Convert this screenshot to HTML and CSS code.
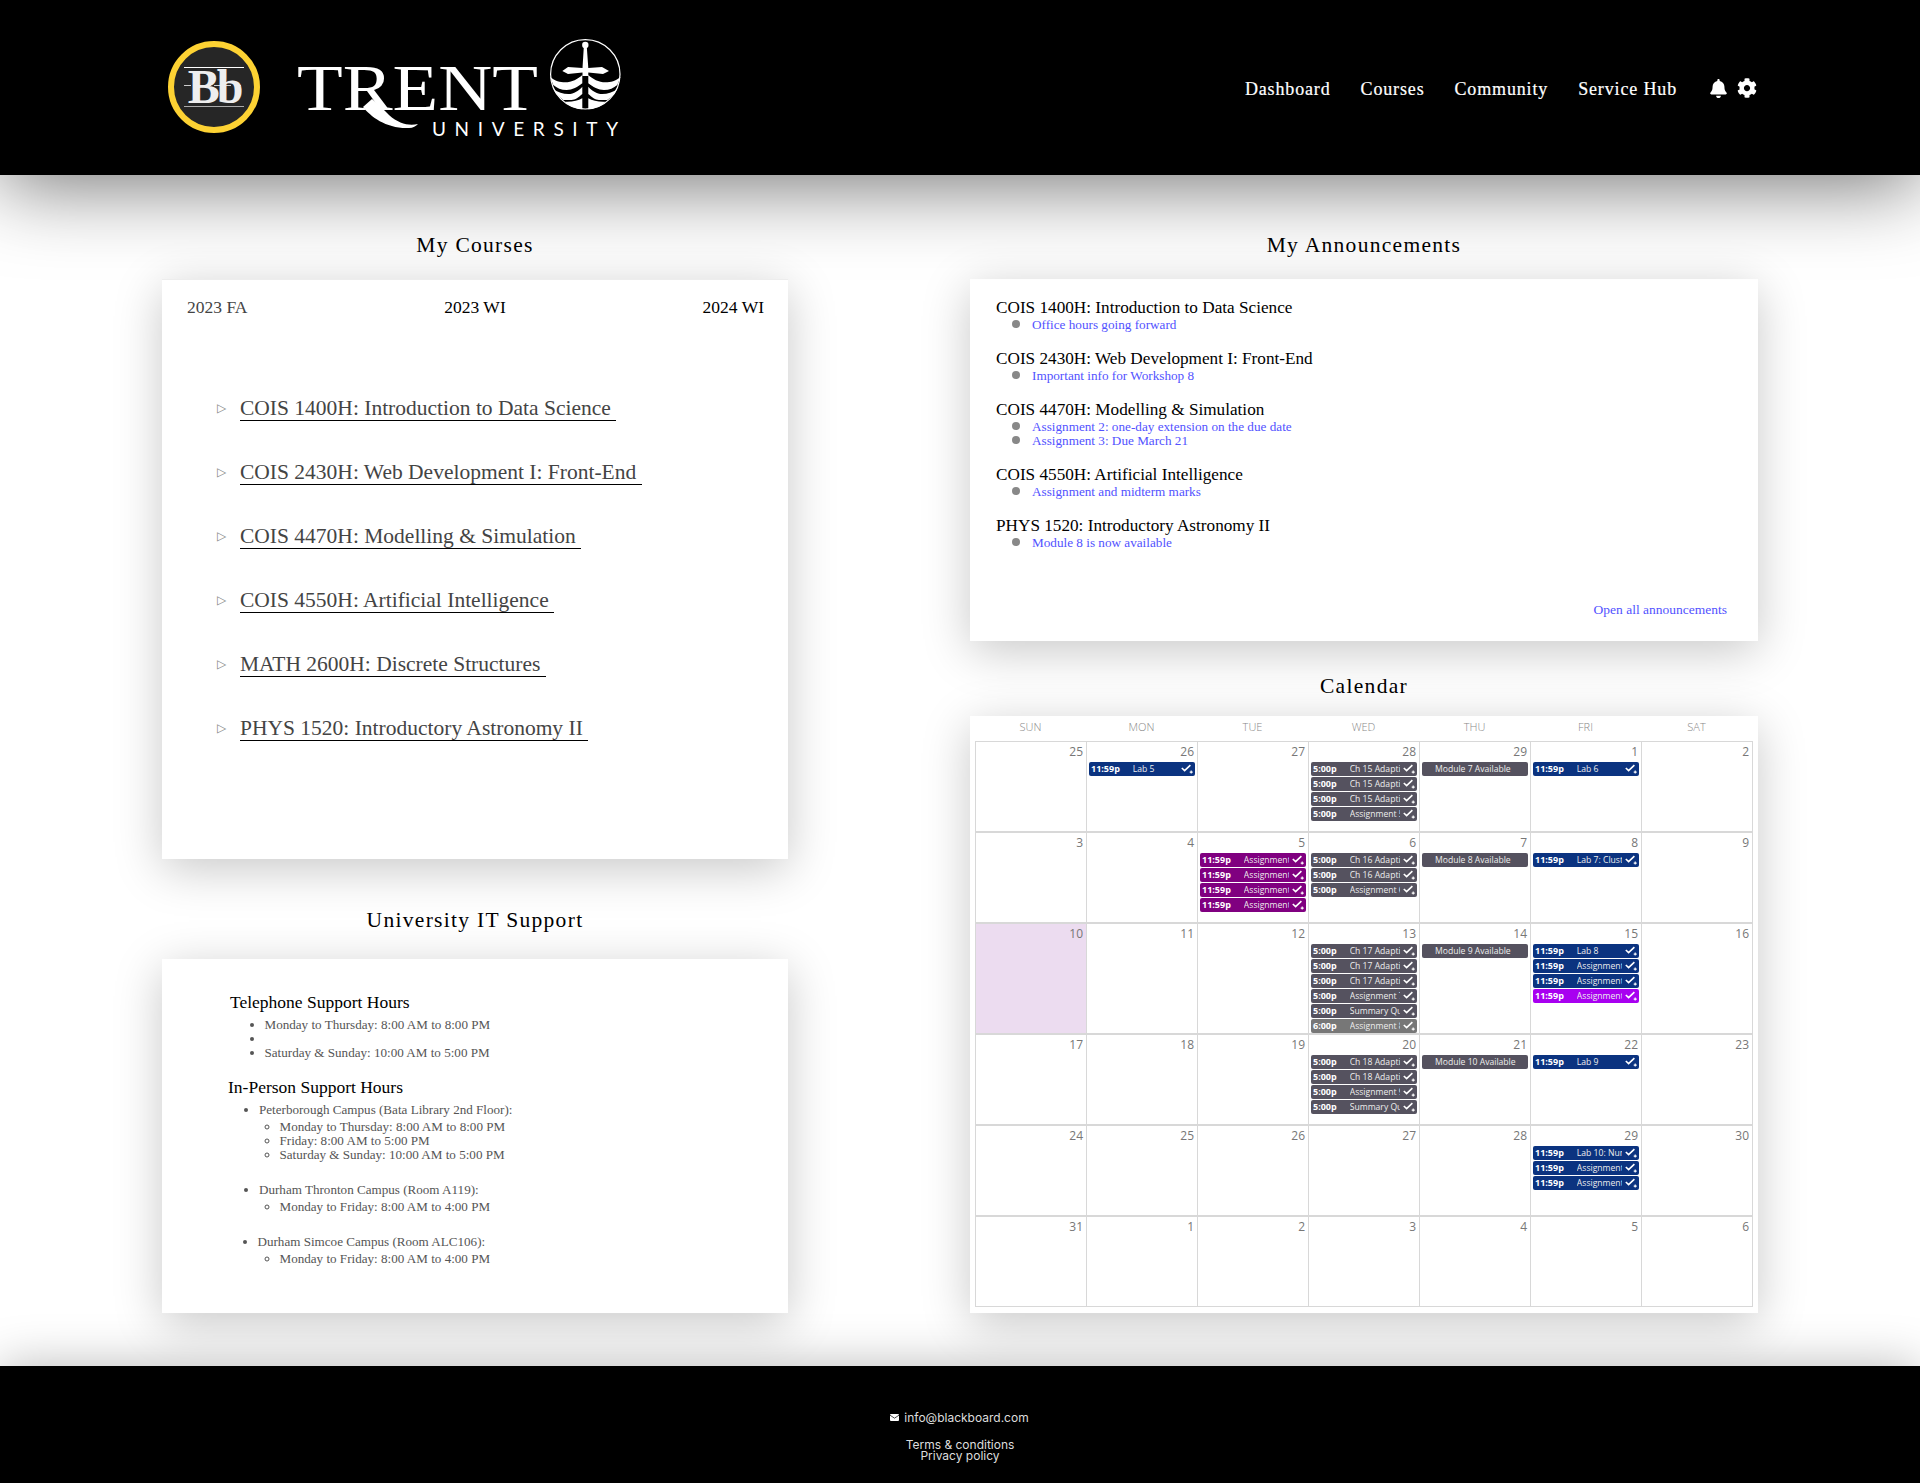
FILE: index.html
```html
<!DOCTYPE html>
<html lang="en">
<head>
    <meta charset="UTF-8">
    <title>Dashboard</title>
    <link rel="stylesheet" href="styles.css">
</head>
<body>

<svg class="defs" width="0" height="0">
    <symbol id="chk" viewBox="0 0 12 10">
        <path d="M0.8 4 L3.6 6.600 L9.400 1.200" fill="none" stroke="#fff" stroke-width="1.600"/>
        <path d="M10.200 6.600 V9.600 M8.700 8.100 H11.700" fill="none" stroke="#fff" stroke-width="1.100"/>
    </symbol>
</svg>

<header class="top">
    <svg class="bb" viewBox="0 0 92 92">
        <circle cx="46" cy="46" r="43" fill="#262626" stroke="#fdd233" stroke-width="6"/>
        <path d="M16 26.500 H76" stroke="#fff" stroke-width="1"/>
        <path d="M16 44.500 H76" stroke="#ccc" stroke-width="1" stroke-dasharray="7 3"/>
        <path d="M16 65.500 H76" stroke="#aaa" stroke-width="1"/>
        <text x="46" y="62" class="bb-text" text-anchor="middle">Bb</text>
    </svg>
    <svg class="trent" viewBox="0 0 326 100">
        <text x="0" y="73" class="trent-text" textLength="241" lengthAdjust="spacingAndGlyphs">TRENT</text>
        <path d="M66 70 C74 80 90 92 112 91 C116 91 119 89 121 87 C112 89 102 87 92 78 C86 72 80 66 75 62 Z" fill="#fff"/>
        <text x="135" y="99" class="trent-sub" textLength="186">UNIVERSITY</text>
        <g transform="translate(253 1)">
            <circle cx="35.300" cy="36.300" r="34.700" fill="none" stroke="#fff" stroke-width="1.200"/>
            <circle cx="35.300" cy="7" r="3.200" fill="#fff"/>
            <path d="M33.800 9 H36.800 L38.300 30 L52 29 L59 33 L53 36 L38.300 34.500 L38.300 38 L32.500 38 L32.500 34.500 L18 36 L12.300 33 L18 29 L32.500 30 Z" fill="#fff"/>
            <path d="M0 38.700 C5 43 10 44.300 15 44.300 C22 44.300 28 41 32.300 37 V45.300 C28 49 22 52 16.700 52 C11 52 7 50 3.300 47 Z" fill="#fff"/>
            <path d="M3.300 51.300 C8 54.500 13 56 18.300 56 C24 56 29 52.500 32.300 48.700 V56 C29 59 25 62 21.700 62 H13.300 C10 60 6 56 3.300 51.300 Z" fill="#fff"/>
            <path d="M15 63.700 C22 64 28 63 32.300 60.300 V71.300 C28 71 26 70 23.300 69.300 C20 68 17 66 15 63.700 Z" fill="#fff"/>
            <path d="M70.600 38.700 C65.600 43 60.600 44.300 55.600 44.300 C48.600 44.300 42.600 41 38.300 37 V45.300 C42.600 49 48.600 52 53.900 52 C59.600 52 63.600 50 67.300 47 Z" fill="#fff"/>
            <path d="M67.300 51.300 C62.600 54.500 57.600 56 52.300 56 C46.600 56 41.600 52.500 38.300 48.700 V56 C41.600 59 45.600 62 48.900 62 H57.300 C60.600 60 64.600 56 67.300 51.300 Z" fill="#fff"/>
            <path d="M55.600 63.700 C48.600 64 42.600 63 38.300 60.300 V71.300 C42.600 71 44.600 70 47.300 69.300 C50.600 68 53.600 66 55.600 63.700 Z" fill="#fff"/>
        </g>
    </svg>
    <nav class="nav">
        <a href="#">Dashboard</a>
        <a href="#">Courses</a>
        <a href="#">Community</a>
        <a href="#">Service Hub</a>
        <span class="nav-icons">
            <svg class="ic-bell" viewBox="0 0 448 512"><path fill="#fff" d="M224 512c35.32 0 63.97-28.65 63.97-64H160.03c0 35.35 28.65 64 63.97 64zm215.39-149.71c-19.32-20.76-55.47-51.99-55.47-154.29 0-77.7-54.48-139.9-127.94-155.16V32c0-17.67-14.32-32-31.98-32s-31.98 14.33-31.98 32v20.84C118.56 68.1 64.08 130.3 64.08 208c0 102.3-36.15 133.53-55.47 154.29-6 6.45-8.66 14.16-8.61 21.71.11 16.4 12.98 32 32.1 32h383.8c19.12 0 32-15.6 32.1-32 .05-7.55-2.61-15.27-8.61-21.71z"/></svg>
            <svg class="ic-gear" viewBox="0 0 512 512"><path fill="#fff" d="M487.4 315.7l-42.6-24.6c4.3-23.2 4.3-47 0-70.2l42.6-24.6c4.9-2.8 7.1-8.6 5.5-14-11.1-35.6-30-67.8-54.7-94.6-3.8-4.1-10-5.1-14.8-2.3L380.8 110c-17.9-15.4-38.5-27.3-60.8-35.1V25.8c0-5.6-3.9-10.5-9.4-11.7-36.7-8.2-74.3-7.8-109.2 0-5.5 1.2-9.4 6.1-9.4 11.7V75c-22.2 7.9-42.8 19.8-60.8 35.1L88.7 85.5c-4.9-2.8-11-1.9-14.8 2.3-24.7 26.7-43.6 58.9-54.7 94.6-1.7 5.4.6 11.2 5.5 14L67.3 221c-4.3 23.2-4.3 47 0 70.2l-42.6 24.6c-4.9 2.8-7.1 8.6-5.5 14 11.1 35.6 30 67.8 54.7 94.6 3.8 4.1 10 5.1 14.8 2.3l42.6-24.6c17.9 15.4 38.5 27.3 60.8 35.1v49.2c0 5.6 3.9 10.5 9.4 11.7 36.7 8.2 74.3 7.8 109.2 0 5.5-1.2 9.4-6.1 9.4-11.7v-49.2c22.2-7.9 42.8-19.8 60.8-35.1l42.6 24.6c4.9 2.8 11 1.9 14.8-2.3 24.7-26.7 43.6-58.9 54.7-94.6 1.5-5.5-.7-11.3-5.6-14.1zM256 336c-44.1 0-80-35.9-80-80s35.9-80 80-80 80 35.9 80 80-35.9 80-80 80z"/></svg>
        </span>
    </nav>
</header>

<main class="content">
    <div class="col">
        <h2 class="title">My Courses</h2>
        <section class="card courses">
            <div class="terms">
                <span class="term-off">2023 FA</span>
                <span>2023 WI</span>
                <span>2024 WI</span>
            </div>
            <ul class="course-list">
                <li><a href="#">COIS 1400H: Introduction to Data Science&nbsp;</a></li>
                <li><a href="#">COIS 2430H: Web Development I: Front-End&nbsp;</a></li>
                <li><a href="#">COIS 4470H: Modelling &amp; Simulation&nbsp;</a></li>
                <li><a href="#">COIS 4550H: Artificial Intelligence&nbsp;</a></li>
                <li><a href="#">MATH 2600H: Discrete Structures&nbsp;</a></li>
                <li><a href="#">PHYS 1520: Introductory Astronomy II&nbsp;</a></li>
            </ul>
        </section>

        <h2 class="title title-it">University IT Support</h2>
        <section class="card support">
            <h3 class="sup-head">Telephone Support Hours</h3>
            <ul class="sup-phone">
                <li>Monday to Thursday: 8:00 AM to 8:00 PM</li>
                <li class="blank"></li>
                <li>Saturday &amp; Sunday: 10:00 AM to 5:00 PM</li>
            </ul>
            <h3 class="sup-head sup-person">In-Person Support Hours</h3>
            <ul class="sup-campus">
                <li>Peterborough Campus (Bata Library 2nd Floor):
                    <ul>
                        <li>Monday to Thursday: 8:00 AM to 8:00 PM</li>
                        <li>Friday: 8:00 AM to 5:00 PM</li>
                        <li>Saturday &amp; Sunday: 10:00 AM to 5:00 PM</li>
                    </ul>
                </li>
                <li>Durham Thronton Campus (Room A119):
                    <ul>
                        <li>Monday to Friday: 8:00 AM to 4:00 PM</li>
                    </ul>
                </li>
                <li class="simcoe">Durham Simcoe Campus (Room ALC106):
                    <ul>
                        <li>Monday to Friday: 8:00 AM to 4:00 PM</li>
                    </ul>
                </li>
            </ul>
        </section>
    </div>

    <div class="col">
        <h2 class="title">My Announcements</h2>
        <section class="card news">
            <div class="news-item">
                <h3>COIS 1400H: Introduction to Data Science</h3>
                <ul><li><a href="#">Office hours going forward</a></li></ul>
            </div>
            <div class="news-item">
                <h3>COIS 2430H: Web Development I: Front-End</h3>
                <ul><li><a href="#">Important info for Workshop 8</a></li></ul>
            </div>
            <div class="news-item">
                <h3>COIS 4470H: Modelling &amp; Simulation</h3>
                <ul>
                    <li><a href="#">Assignment 2: one-day extension on the due date</a></li>
                    <li><a href="#">Assignment 3: Due March 21</a></li>
                </ul>
            </div>
            <div class="news-item">
                <h3>COIS 4550H: Artificial Intelligence</h3>
                <ul><li><a href="#">Assignment and midterm marks</a></li></ul>
            </div>
            <div class="news-item">
                <h3>PHYS 1520: Introductory Astronomy II</h3>
                <ul><li><a href="#">Module 8 is now available</a></li></ul>
            </div>
            <a class="news-all" href="#">Open all announcements</a>
        </section>

        <h2 class="title title-cal">Calendar</h2>
        <section class="card cal">
            <div class="cal-days">
                <span>Sun</span><span>Mon</span><span>Tue</span><span>Wed</span><span>Thu</span><span>Fri</span><span>Sat</span>
            </div>
            <div class="cal-grid">
                <!-- week 1 -->
                <div class="day"><i>25</i></div>
                <div class="day"><i>26</i>
                    <div class="ev navy"><b>11:59p</b><span>Lab 5</span><svg><use href="#chk"/></svg></div>
                </div>
                <div class="day"><i>27</i></div>
                <div class="day"><i>28</i>
                    <div class="ev slate"><b>5:00p</b><span>Ch 15 Adaptive Quiz</span><svg><use href="#chk"/></svg></div>
                    <div class="ev slate"><b>5:00p</b><span>Ch 15 Adaptive Quiz</span><svg><use href="#chk"/></svg></div>
                    <div class="ev slate"><b>5:00p</b><span>Ch 15 Adaptive Quiz</span><svg><use href="#chk"/></svg></div>
                    <div class="ev slate"><b>5:00p</b><span>Assignment 5</span><svg><use href="#chk"/></svg></div>
                </div>
                <div class="day"><i>29</i>
                    <div class="ev slate plain"><span>Module 7 Available</span></div>
                </div>
                <div class="day"><i>1</i>
                    <div class="ev navy"><b>11:59p</b><span>Lab 6</span><svg><use href="#chk"/></svg></div>
                </div>
                <div class="day"><i>2</i></div>

                <!-- week 2 -->
                <div class="day"><i>3</i></div>
                <div class="day"><i>4</i></div>
                <div class="day"><i>5</i>
                    <div class="ev plum"><b>11:59p</b><span>Assignment 1</span><svg><use href="#chk"/></svg></div>
                    <div class="ev plum"><b>11:59p</b><span>Assignment 2</span><svg><use href="#chk"/></svg></div>
                    <div class="ev plum"><b>11:59p</b><span>Assignment 3</span><svg><use href="#chk"/></svg></div>
                    <div class="ev plum"><b>11:59p</b><span>Assignment 4</span><svg><use href="#chk"/></svg></div>
                </div>
                <div class="day"><i>6</i>
                    <div class="ev slate"><b>5:00p</b><span>Ch 16 Adaptive Quiz</span><svg><use href="#chk"/></svg></div>
                    <div class="ev slate"><b>5:00p</b><span>Ch 16 Adaptive Quiz</span><svg><use href="#chk"/></svg></div>
                    <div class="ev slate"><b>5:00p</b><span>Assignment 6</span><svg><use href="#chk"/></svg></div>
                </div>
                <div class="day"><i>7</i>
                    <div class="ev slate plain"><span>Module 8 Available</span></div>
                </div>
                <div class="day"><i>8</i>
                    <div class="ev navy"><b>11:59p</b><span>Lab 7: Clustering</span><svg><use href="#chk"/></svg></div>
                </div>
                <div class="day"><i>9</i></div>

                <!-- week 3 -->
                <div class="day today"><i>10</i></div>
                <div class="day"><i>11</i></div>
                <div class="day"><i>12</i></div>
                <div class="day"><i>13</i>
                    <div class="ev slate"><b>5:00p</b><span>Ch 17 Adaptive Quiz</span><svg><use href="#chk"/></svg></div>
                    <div class="ev slate"><b>5:00p</b><span>Ch 17 Adaptive Quiz</span><svg><use href="#chk"/></svg></div>
                    <div class="ev slate"><b>5:00p</b><span>Ch 17 Adaptive Quiz</span><svg><use href="#chk"/></svg></div>
                    <div class="ev slate"><b>5:00p</b><span>Assignment 7</span><svg><use href="#chk"/></svg></div>
                    <div class="ev slate"><b>5:00p</b><span>Summary Quiz</span><svg><use href="#chk"/></svg></div>
                    <div class="ev ash"><b>6:00p</b><span>Assignment 8</span><svg><use href="#chk"/></svg></div>
                </div>
                <div class="day"><i>14</i>
                    <div class="ev slate plain"><span>Module 9 Available</span></div>
                </div>
                <div class="day"><i>15</i>
                    <div class="ev navy"><b>11:59p</b><span>Lab 8</span><svg><use href="#chk"/></svg></div>
                    <div class="ev navy"><b>11:59p</b><span>Assignment 3</span><svg><use href="#chk"/></svg></div>
                    <div class="ev navy"><b>11:59p</b><span>Assignment 4</span><svg><use href="#chk"/></svg></div>
                    <div class="ev violet"><b>11:59p</b><span>Assignment 5</span><svg><use href="#chk"/></svg></div>
                </div>
                <div class="day"><i>16</i></div>

                <!-- week 4 -->
                <div class="day"><i>17</i></div>
                <div class="day"><i>18</i></div>
                <div class="day"><i>19</i></div>
                <div class="day"><i>20</i>
                    <div class="ev slate"><b>5:00p</b><span>Ch 18 Adaptive Quiz</span><svg><use href="#chk"/></svg></div>
                    <div class="ev slate"><b>5:00p</b><span>Ch 18 Adaptive Quiz</span><svg><use href="#chk"/></svg></div>
                    <div class="ev slate"><b>5:00p</b><span>Assignment 9</span><svg><use href="#chk"/></svg></div>
                    <div class="ev slate"><b>5:00p</b><span>Summary Quiz</span><svg><use href="#chk"/></svg></div>
                </div>
                <div class="day"><i>21</i>
                    <div class="ev slate plain"><span>Module 10 Available</span></div>
                </div>
                <div class="day"><i>22</i>
                    <div class="ev navy"><b>11:59p</b><span>Lab 9</span><svg><use href="#chk"/></svg></div>
                </div>
                <div class="day"><i>23</i></div>

                <!-- week 5 -->
                <div class="day"><i>24</i></div>
                <div class="day"><i>25</i></div>
                <div class="day"><i>26</i></div>
                <div class="day"><i>27</i></div>
                <div class="day"><i>28</i></div>
                <div class="day"><i>29</i>
                    <div class="ev navy"><b>11:59p</b><span>Lab 10: Numerical</span><svg><use href="#chk"/></svg></div>
                    <div class="ev navy"><b>11:59p</b><span>Assignment 6</span><svg><use href="#chk"/></svg></div>
                    <div class="ev navy"><b>11:59p</b><span>Assignment 7</span><svg><use href="#chk"/></svg></div>
                </div>
                <div class="day"><i>30</i></div>

                <!-- week 6 -->
                <div class="day"><i>31</i></div>
                <div class="day"><i>1</i></div>
                <div class="day"><i>2</i></div>
                <div class="day"><i>3</i></div>
                <div class="day"><i>4</i></div>
                <div class="day"><i>5</i></div>
                <div class="day"><i>6</i></div>
            </div>
        </section>
    </div>
</main>

<footer class="bottom">
    <div class="mail">
        <svg viewBox="0 0 9 7"><rect width="9" height="7" rx="1" fill="#fff"/><path d="M0 1.200 L4.500 4.200 L9 1.200" fill="none" stroke="#000" stroke-width="0.7"/></svg>
        <a href="#">info@blackboard.com</a>
    </div>
    <a class="legal" href="#">Terms &amp; conditions</a>
    <a class="legal" href="#">Privacy policy</a>
</footer>

</body>
</html>
```

FILE: styles.css
```css
body {
    margin: 0;
    background-color: #fff;
    font-family: "Liberation Serif", serif;
    color: #000;
}

a {
    text-decoration: none;
}

.defs {
    display: block;
    height: 0;
}

/* header */
.top {
    position: relative;
    z-index: 2;
    height: 175px;
    background-color: #000;
    box-shadow: 0 10px 80px rgba(0, 0, 0, 0.55);
    display: flex;
    align-items: flex-start;
    padding-left: 168px;
    padding-right: 163px;
}

.bb {
    width: 92px;
    height: 92px;
    margin-top: 41px;
    flex: none;
}

.bb-text {
    font-family: "Liberation Serif", serif;
    font-weight: bold;
    font-size: 48px;
    letter-spacing: -3px;
    fill: #eee;
}

.trent {
    width: 326px;
    height: 100px;
    margin-top: 37px;
    margin-left: 37px;
    flex: none;
    overflow: visible;
}

.trent-text {
    font-family: "Liberation Serif", serif;
    font-size: 65px;
    fill: #fff;
}

.trent-sub {
    font-family: "Lato", sans-serif;
    font-size: 19px;
    fill: #fff;
}

.nav {
    margin-left: auto;
    margin-top: 77px;
    display: flex;
    align-items: center;
    gap: 30px;
    font-size: 18px;
    letter-spacing: 0.85px;
    line-height: 24px;
    -webkit-text-stroke: 0.2px #fff;
}

.nav a {
    color: #fff;
}

.nav-icons {
    display: flex;
    align-items: center;
    gap: 10px;
    margin-left: 3px;
    margin-top: -2px;
}

.ic-bell {
    width: 17px;
    height: 19px;
}

.ic-gear {
    width: 20px;
    height: 20px;
}

/* main columns */
.content {
    display: grid;
    grid-template-columns: 626px 788px;
    justify-content: space-between;
    padding: 58px 162px 53px;
}

.col {
    display: flex;
    flex-direction: column;
}

.title {
    margin: 0 0 22px;
    font-size: 21.500px;
    line-height: 24px;
    font-weight: normal;
    letter-spacing: 1.300px;
    text-align: center;
}

.title-it {
    margin: 49px 0 27px;
}

.title-cal {
    margin: 33px 0 18px;
}

.card {
    background-color: #fff;
    box-shadow: 0 10px 45px rgba(0, 0, 0, 0.22);
    box-sizing: border-box;
}

/* my courses */
.courses {
    height: 580px;
    padding: 18px 24px 0 25px;
    border-top: 1px solid #eee;
}

.terms {
    display: flex;
    justify-content: space-between;
    font-size: 17.500px;
    line-height: 18px;
}

.term-off {
    color: #444;
}

.course-list {
    list-style: none;
    margin: 80px 0 0;
    padding: 0 0 0 53px;
}

.course-list li {
    position: relative;
    height: 64px;
}

.course-list li::before {
    content: "\25B7";
    position: absolute;
    left: -23px;
    top: 5px;
    font-family: "DejaVu Sans", sans-serif;
    font-size: 12px;
    color: #888;
}

.course-list a {
    display: inline-block;
    font-size: 21.500px;
    line-height: 24px;
    color: #444;
    border-bottom: 1px solid #000;
}

/* it support */
.support {
    height: 354px;
    padding: 34px 0 0 68px;
    font-size: 13.100px;
    color: #555;
}

.sup-head {
    margin: 0;
    font-size: 17.500px;
    line-height: 18px;
    font-weight: normal;
    color: #000;
}

.sup-person {
    margin-left: -2px;
    margin-top: 18px;
}

.sup-phone {
    margin: 7px 0 0;
    padding-left: 34.500px;
}

.sup-phone li {
    line-height: 14px;
}

.sup-phone .blank {
    height: 10px;
    margin-bottom: 4px;
}

.sup-campus {
    margin: 7px 0 0;
    padding-left: 29px;
    line-height: 14px;
}

.sup-campus > li {
    padding-bottom: 21px;
}

.sup-campus ul {
    margin: 3px 0 0;
    padding-left: 20.500px;
    list-style: circle;
}

.simcoe {
    margin-left: -1.500px;
}

.simcoe ul {
    padding-left: 22px;
}

/* announcements */
.news {
    position: relative;
    height: 362px;
    padding: 20px 26px 0;
}

.news-item {
    margin-bottom: 19px;
}

.news-item h3 {
    margin: 0;
    font-size: 17.200px;
    line-height: 18px;
    font-weight: normal;
}

.news-item ul {
    margin: 0;
    padding: 0;
    list-style: none;
}

.news-item li {
    position: relative;
    height: 14px;
    padding-left: 36px;
    line-height: 14px;
}

.news-item li::before {
    content: "";
    position: absolute;
    left: 16px;
    top: 3px;
    width: 8px;
    height: 8px;
    border-radius: 50%;
    background-color: #888;
}

.news-item a,
.news-all {
    font-size: 13.200px;
    color: #5252ff;
}

.news-all {
    position: absolute;
    right: 31px;
    bottom: 23px;
    font-size: 13.500px;
}

/* calendar */
.cal {
    height: 597px;
    padding: 0 5px;
    font-family: "Open Sans", sans-serif;
}

.cal-days {
    display: grid;
    grid-template-columns: repeat(7, 111px);
    height: 25px;
    font-size: 11px;
    font-weight: 300;
    line-height: 21px;
    text-align: center;
    text-transform: uppercase;
    color: #888;
}

.cal-grid {
    display: grid;
    grid-template-columns: repeat(7, 110px);
    grid-template-rows: 89px 89px 109px 89px 89px 89px;
    column-gap: 1px;
    row-gap: 2px;
    width: max-content;
    background-color: #d8d8d8;
    border: 1px solid #d8d8d8;
}

.day {
    background-color: #fff;
    overflow: hidden;
}

.day.today {
    background-color: #ecdcf0;
}

.day i {
    display: block;
    height: 20px;
    padding-right: 3px;
    font-style: normal;
    font-size: 12px;
    line-height: 19px;
    text-align: right;
    color: #777;
}

.ev {
    display: flex;
    align-items: center;
    height: 14px;
    margin: 0 2px 1px;
    padding: 0 2px;
    border-radius: 2px;
    color: #eee;
    font-size: 8.600px;
    line-height: 14px;
    white-space: nowrap;
}

.ev b {
    flex: none;
    margin-right: 13px;
    font-size: 9px;
    color: #fff;
}

.ev span {
    flex: 1;
    min-width: 0;
    overflow: hidden;
}

.ev svg {
    flex: none;
    width: 12px;
    height: 10px;
    margin-left: 3px;
}

.ev.plain span {
    padding-left: 11px;
}

.navy {
    background-color: #0b3380;
}

.slate {
    background-color: #55525f;
}

.plum {
    background-color: #800080;
}

.violet {
    background-color: #a800f0;
}

.ash {
    background-color: #777;
}

/* footer */
.bottom {
    position: relative;
    height: 117px;
    box-sizing: border-box;
    padding-top: 40px;
    background-color: #000;
    box-shadow: 0 0 50px rgba(0, 0, 0, 0.28);
    font-family: "Inter", sans-serif;
    font-size: 12px;
    text-align: center;
}

.bottom a {
    color: #ddd;
}

.mail {
    display: flex;
    align-items: center;
    justify-content: center;
    gap: 5px;
    height: 22px;
    margin-left: -1px;
    margin-bottom: 11px;
}

.mail svg {
    width: 9px;
    height: 7px;
}

.legal {
    display: block;
    line-height: 11px;
}
```
